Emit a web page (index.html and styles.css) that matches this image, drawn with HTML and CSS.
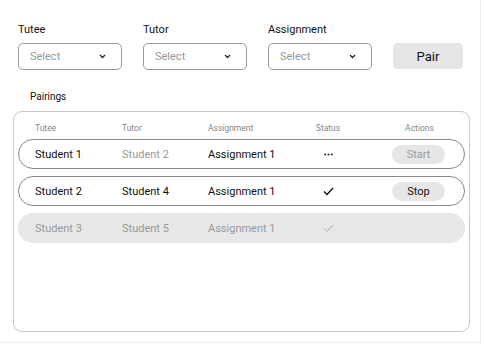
FILE: index.html
```html
<!DOCTYPE html>
<html lang="en">
<head>
    <meta charset="UTF-8">
    <meta name="viewport" content="width=device-width, initial-scale=1.0">
    <title>Pairings</title>
    <link rel="stylesheet" href="styles.css">
</head>
<body>
    <div class="page">
        <div class="controls">
            <div class="field">
                <label>Tutee</label>
                <div class="select">
                    <span>Select</span>
                    <svg class="chevron" width="7" height="5" viewBox="0 0 7 5"><polyline points="1,1 3.5,3.5 6,1" fill="none" stroke="#222" stroke-width="1.3"/></svg>
                </div>
            </div>
            <div class="field">
                <label>Tutor</label>
                <div class="select">
                    <span>Select</span>
                    <svg class="chevron" width="7" height="5" viewBox="0 0 7 5"><polyline points="1,1 3.5,3.5 6,1" fill="none" stroke="#222" stroke-width="1.3"/></svg>
                </div>
            </div>
            <div class="field">
                <label>Assignment</label>
                <div class="select">
                    <span>Select</span>
                    <svg class="chevron" width="7" height="5" viewBox="0 0 7 5"><polyline points="1,1 3.5,3.5 6,1" fill="none" stroke="#222" stroke-width="1.3"/></svg>
                </div>
            </div>
            <button class="pair-btn">Pair</button>
        </div>

        <p class="section-title">Pairings</p>

        <div class="card">
            <div class="grid head">
                <span>Tutee</span>
                <span>Tutor</span>
                <span>Assignment</span>
                <span class="center">Status</span>
                <span class="center">Actions</span>
            </div>

            <div class="grid row outlined">
                <span>Student 1</span>
                <span class="muted">Student 2</span>
                <span>Assignment 1</span>
                <span class="center">
                    <svg width="9" height="3" viewBox="0 0 9 3"><circle cx="1.2" cy="1.5" r="1" fill="#222"/><circle cx="4.5" cy="1.5" r="1" fill="#222"/><circle cx="7.8" cy="1.5" r="1" fill="#222"/></svg>
                </span>
                <span class="center"><button class="pill muted">Start</button></span>
            </div>

            <div class="grid row outlined">
                <span>Student 2</span>
                <span>Student 4</span>
                <span>Assignment 1</span>
                <span class="center">
                    <svg width="11" height="9" viewBox="0 0 11 9"><polyline points="1,4.5 4,7.5 10,1" fill="none" stroke="#111" stroke-width="1.4"/></svg>
                </span>
                <span class="center"><button class="pill">Stop</button></span>
            </div>

            <div class="grid row done">
                <span>Student 3</span>
                <span>Student 5</span>
                <span>Assignment 1</span>
                <span class="center">
                    <svg width="11" height="9" viewBox="0 0 11 9"><polyline points="1,4.5 4,7.5 10,1" fill="none" stroke="#aaa" stroke-width="1"/></svg>
                </span>
                <span></span>
            </div>
        </div>
    </div>
</body>
</html>
```

FILE: styles.css
```css
body {
    margin: 0;
    font-family: Roboto, "Liberation Sans", sans-serif;
    background: #fff;
    color: #111;
}
.page {
    width: 481px;
    height: 343px;
    box-sizing: border-box;
    border-right: 1px solid #eee;
    border-bottom: 1px solid #eee;
    padding: 23px 0 0 13px;
}
.controls {
    display: flex;
    align-items: flex-end;
    gap: 21px;
    padding-left: 5px;
}
.field label {
    display: block;
    font-size: 11px;
    line-height: 13px;
    margin-bottom: 7px;
}
.select {
    width: 104px;
    height: 27px;
    box-sizing: border-box;
    border: 1px solid #999;
    border-radius: 5px;
    display: flex;
    align-items: center;
    justify-content: space-between;
    padding: 0 15px 0 11px;
    font-size: 11px;
    color: #999;
}
.chevron {
    display: block;
}
.pair-btn {
    width: 70px;
    height: 26px;
    margin-bottom: 1px;
    border: none;
    border-radius: 5px;
    background: #e6e6e6;
    font-family: inherit;
    font-size: 13px;
    color: #111;
}
.section-title {
    margin: 21px 0 0 17px;
    font-size: 10px;
    line-height: 12px;
}
.card {
    margin-top: 8px;
    width: 457px;
    height: 221px;
    box-sizing: border-box;
    border: 1px solid #c8c8c8;
    border-radius: 9px;
    padding: 0 4px;
}
.grid {
    display: grid;
    grid-template-columns: 87px 86px 90px 60px 1fr;
    align-items: center;
    padding: 0 19px 0 16px;
}
.center {
    display: flex;
    justify-content: center;
}
.grid .center:last-child {
    justify-content: flex-end;
}
.head {
    padding-top: 12px;
    padding-left: 17px;
    margin-bottom: 6px;
    font-size: 8.5px;
    line-height: 9px;
    color: #888;
}
.head .center:last-child {
    width: 53px;
    justify-self: end;
    justify-content: center;
}
.row {
    height: 30px;
    box-sizing: border-box;
    border-radius: 15px;
    font-size: 11px;
    margin-bottom: 7px;
}
.outlined {
    border: 1px solid #888;
}
.done {
    background: #e8e8e8;
    color: #999;
    padding-left: 17px;
}
.muted {
    color: #999;
}
.pill {
    width: 53px;
    height: 19px;
    border: none;
    border-radius: 10px;
    background: #e6e6e6;
    font-family: inherit;
    font-size: 11px;
    color: #111;
    padding: 0;
}
.pill.muted {
    color: #999;
}
svg {
    display: block;
}
```
